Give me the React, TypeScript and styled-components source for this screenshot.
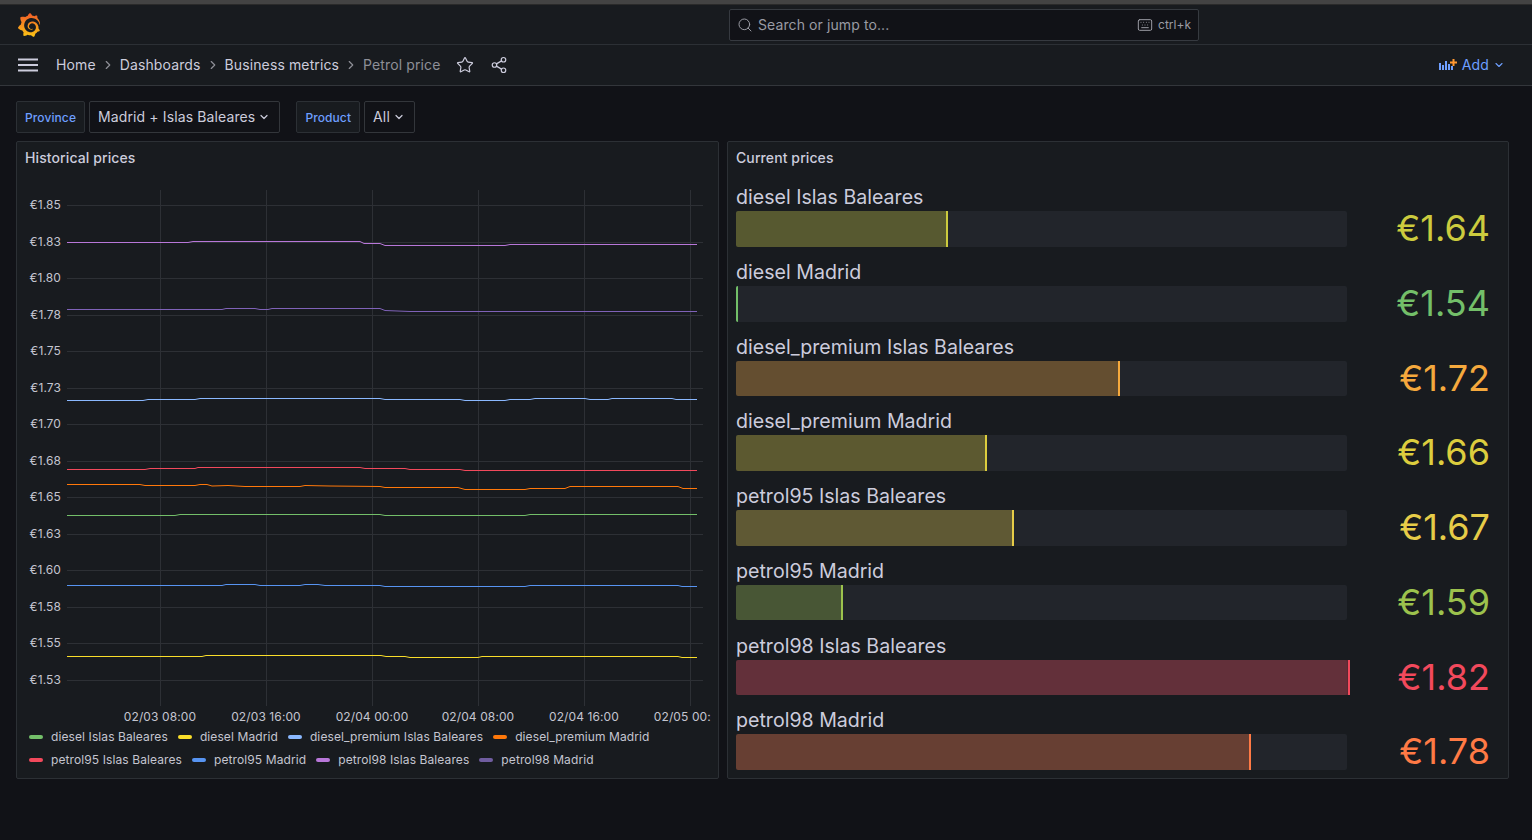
import React from "react";
import styled, { createGlobalStyle } from "styled-components";
import { ChevronDown, ChevronRight, Keyboard, Search, Share2, Star } from "lucide-react";
import { SiGrafana } from "react-icons/si";

const Global = createGlobalStyle`
  html, body { margin: 0; padding: 0; background: #111217; }
  body { font-family: Inter, "Liberation Sans", sans-serif; color: #ccccdc; width: 1532px; height: 840px; overflow: hidden; }
  * { box-sizing: border-box; }
`;

const Page = styled.div`
  width: 1532px;
  height: 840px;
  display: flex;
  flex-direction: column;
`;
const WindowEdge = styled.div`
  height: 5px;
  background: #434343;
  border-bottom: 1px solid #2a2a2a;
  flex: none;
`;
const TopBar = styled.header`
  height: 40px;
  flex: none;
  display: flex;
  align-items: center;
  background: #181b1f;
  border-bottom: 1px solid #2c3035;
  padding-left: 17px;
`;
const LogoMark = styled.svg`
  width: 24px;
  height: 24px;
  flex: none;
`;
const SearchBox = styled.div`
  margin-left: 688px;
  width: 470px;
  height: 32px;
  display: flex;
  align-items: center;
  background: #111217;
  border: 1px solid #363a40;
  border-radius: 2px;
  padding: 0 7px;
  color: #9a9ba3;
  font-size: 14px;
  letter-spacing: 0.1px;
`;
const SearchText = styled.span`
  margin-left: 5px;
  flex: 1;
`;
const Shortcut = styled.span`
  display: flex;
  align-items: center;
  gap: 5px;
  font-size: 12px;
  letter-spacing: 0;
`;
const NavBar = styled.nav`
  height: 41px;
  flex: none;
  display: flex;
  align-items: center;
  background: #181b1f;
  border-bottom: 1px solid #33363b;
  padding: 0 27px 1px 18px;
  font-size: 14px;
  letter-spacing: 0.12px;
`;
const Burger = styled.svg`
  width: 20px;
  height: 14px;
  margin-right: 18px;
  flex: none;
`;
const Crumb = styled.span<{ $last?: boolean }>`
  color: ${(p) => (p.$last ? "#8e8f97" : "#ccccdc")};
`;
const CrumbSep = styled.span`
  width: 24px;
  display: flex;
  justify-content: center;
  color: #8e8f97;
`;
const NavIcon = styled.span<{ $first?: boolean }>`
  display: flex;
  color: #ccccdc;
  margin-left: ${(p) => (p.$first ? "15px" : "16px")};
`;
const AddButton = styled.div`
  margin-left: auto;
  display: flex;
  align-items: center;
  color: #6e9fff;
  gap: 4px;
`;
const Filters = styled.div`
  display: flex;
  align-items: center;
  height: 32px;
  margin: 15px 0 8px 16px;
`;
const FilterLabel = styled.div`
  height: 32px;
  display: flex;
  align-items: center;
  padding: 0 8px;
  background: #181b1f;
  border: 1px solid #2c3035;
  border-radius: 2px;
  color: #6e9fff;
  font-size: 12px;
  font-weight: 500;
  letter-spacing: 0.1px;
  margin-right: 4px;
`;
const FilterValue = styled.div<{ $gap?: boolean }>`
  height: 32px;
  display: flex;
  align-items: center;
  gap: 3px;
  padding: 0 9px 1px 8px;
  background: #111217;
  border: 1px solid #33363b;
  border-radius: 2px;
  font-size: 14px;
  letter-spacing: 0.12px;
  margin-right: ${(p) => (p.$gap ? "16px" : "0")};
`;
const Panels = styled.main`
  display: flex;
  gap: 8px;
  padding-left: 16px;
  height: 638px;
`;
const Panel = styled.section<{ $width: number }>`
  width: ${(p) => p.$width}px;
  background: #181b1f;
  border: 1px solid #2c3035;
  border-radius: 2px;
  display: flex;
  flex-direction: column;
`;
const PanelTitle = styled.h2`
  margin: 0;
  flex: none;
  height: 31px;
  padding: 7px 8px 0;
  font-size: 14px;
  line-height: 18px;
  font-weight: 500;
  letter-spacing: 0.1px;
  color: #ccccdc;
`;
const ChartSvg = styled.svg`
  display: block;
  width: 694px;
  height: 546px;
  margin-top: 7px;
  flex: none;
  font-family: Inter, "Liberation Sans", sans-serif;
  font-size: 12px;
  letter-spacing: 0.1px;
`;
const Legend = styled.div`
  display: flex;
  flex-wrap: wrap;
  padding-left: 12px;
  column-gap: 10px;
  font-size: 12px;
  letter-spacing: 0.1px;
  line-height: 23px;
  margin-top: -1px;
`;
const LegendBreak = styled.div`
  flex-basis: 100%;
  height: 0;
`;
const LegendItem = styled.div`
  display: flex;
  align-items: center;
  color: #c4c5d0;
`;
const Swatch = styled.i<{ $color: string }>`
  width: 14px;
  height: 4px;
  border-radius: 2px;
  margin-right: 8px;
  background: ${(p) => p.$color};
`;
const GaugeList = styled.div`
  padding: 0 18px 0 8px;
  margin-top: -0.4px;
`;
const GaugeRow = styled.div`
  height: 74.71px;
  display: grid;
  grid-template-columns: 611px 1fr;
  grid-template-rows: 1fr 36px;
`;
const GaugeLabel = styled.div`
  grid-column: 1 / 3;
  align-self: end;
  font-size: 19.6px;
  line-height: 22px;
  margin-bottom: 3px;
  color: #ccccdc;
  white-space: nowrap;
`;
const Track = styled.div`
  position: relative;
  background: #22252b;
  border-radius: 2px;
  height: 35.6px;
`;
const Fill = styled.div<{ $color: string; $width: number }>`
  position: absolute;
  left: 0;
  top: 0;
  bottom: 0;
  width: ${(p) => p.$width}px;
  background: ${(p) => p.$color}50;
  border-right: 2px solid ${(p) => p.$color};
  border-radius: 2px 0 0 2px;
`;
const GaugeValue = styled.div<{ $color: string }>`
  color: ${(p) => p.$color};
  font-size: 36px;
  line-height: 34px;
  text-align: right;
  font-weight: 400;
  white-space: nowrap;
`;

type Pt = [number, number];
const series: { name: string; color: string; line?: string; pts: Pt[] }[] = [
  { name: "diesel Islas Baleares", color: "#73bf69", pts: [[67,515.5],[175,515.5],[180,514.5],[380,514.5],[385,515.5],[525,515.5],[530,514.5],[697,514.5]] },
  { name: "diesel Madrid", color: "#fade2a", pts: [[67,656.5],[202,656.5],[206,655.5],[381,655.5],[386,656.5],[405,656.5],[410,657.5],[478,657.5],[482,656.5],[678,656.5],[682,657.5],[697,657.5]] },
  { name: "diesel_premium Islas Baleares", color: "#8ab8ff", pts: [[67,400.5],[143,400.5],[148,399.5],[195,399.5],[200,398.5],[380,398.5],[385,399.5],[460,399.5],[465,400.5],[505,400.5],[510,399.5],[530,399.5],[535,398.5],[585,398.5],[590,399.5],[608,399.5],[612,398.5],[672,398.5],[676,399.5],[697,399.5]] },
  { name: "diesel_premium Madrid", color: "#ff780a", pts: [[67,484.5],[140,484.5],[145,485.5],[195,485.5],[200,484.5],[207,484.5],[212,486],[228,485.5],[245,486.5],[300,486.5],[305,485.5],[330,486],[380,486.5],[385,487.5],[458,487.5],[465,489.5],[525,489.5],[530,488.5],[565,488.5],[570,486.5],[678,486.5],[683,488.5],[697,488.5]] },
  { name: "petrol95 Islas Baleares", color: "#f2495c", pts: [[67,469.5],[145,469.5],[150,468.5],[195,468.5],[198,467.5],[360,467.5],[365,468.5],[405,468.5],[410,469.5],[460,469.5],[465,470.5],[697,470.5]] },
  { name: "petrol95 Madrid", color: "#5794f2", pts: [[67,585.5],[222,585.5],[226,584.5],[255,584.5],[260,585.5],[300,585.5],[305,584.5],[318,584.5],[325,585.5],[380,585.5],[385,586.5],[525,586.5],[530,585.5],[678,585.5],[682,586.5],[697,586.5]] },
  { name: "petrol98 Islas Baleares", color: "#b877d9", pts: [[67,242.5],[188,242.5],[193,241.5],[360,241.5],[364,243.5],[380,243.5],[385,245.5],[505,245.5],[510,244.5],[697,244.5]] },
  { name: "petrol98 Madrid", color: "#705da0", line: "#7f62b8", pts: [[67,309.5],[222,309.5],[226,308.5],[255,308.5],[260,309.5],[268,309.5],[272,308.5],[380,308.5],[385,310.5],[410,311.5],[697,311.5]] },
];
const yTicks = ["1.85","1.83","1.80","1.78","1.75","1.73","1.70","1.68","1.65","1.63","1.60","1.58","1.55","1.53"];
const xTicks: [number, string][] = [[160,"02/03 08:00"],[266,"02/03 16:00"],[372,"02/04 00:00"],[478,"02/04 08:00"],[584,"02/04 16:00"],[690,"02/05 00:00"]];

const gauges = [
  { name: "diesel Islas Baleares", value: "€1.64", color: "#cccb3e", width: 212 },
  { name: "diesel Madrid", value: "€1.54", color: "#73bf69", width: 2 },
  { name: "diesel_premium Islas Baleares", value: "€1.72", color: "#f5a93d", width: 384 },
  { name: "diesel_premium Madrid", value: "€1.66", color: "#dccd3e", width: 251 },
  { name: "petrol95 Islas Baleares", value: "€1.67", color: "#e6cc48", width: 278 },
  { name: "petrol95 Madrid", value: "€1.59", color: "#9cc24d", width: 107 },
  { name: "petrol98 Islas Baleares", value: "€1.82", color: "#f2495c", width: 614 },
  { name: "petrol98 Madrid", value: "€1.78", color: "#ff7a45", width: 515 },
];

const Chart = () => (
  <ChartSvg viewBox="17 180 694 546">
    {yTicks.map((t, i) => {
      const y = Math.round(205 + i * 36.54) + 0.5;
      return (
        <g key={t}>
          <line x1={67} x2={703} y1={y} y2={y} stroke="#2d3035" />
          <text x={61} y={y + 3.5} textAnchor="end" fill="#c4c5d0">€{t}</text>
        </g>
      );
    })}
    {xTicks.map(([x, t]) => (
      <g key={t}>
        <line x1={x + 0.5} x2={x + 0.5} y1={190} y2={706} stroke="#2d3035" />
        <text x={x} y={721} textAnchor="middle" fill="#c4c5d0">{t}</text>
      </g>
    ))}
    {series.map((s) => (
      <polyline key={s.name} points={s.pts.map((p) => p.join(",")).join(" ")} fill="none" stroke={s.line ?? s.color} strokeWidth={1} />
    ))}
  </ChartSvg>
);

export default function App() {
  return (
    <Page>
      <Global />
      <WindowEdge />
      <TopBar>
        <LogoMark viewBox="0 0 24 24">
          <defs>
            <linearGradient id="grafanaFill" x1="0.5" y1="1" x2="0.5" y2="0">
              <stop offset="0" stopColor="#fbc615" />
              <stop offset="1" stopColor="#f05a28" />
            </linearGradient>
          </defs>
          <SiGrafana size={24} fill="url(#grafanaFill)" />
        </LogoMark>
        <SearchBox>
          <Search size={16} strokeWidth={1.5} />
          <SearchText>Search or jump to...</SearchText>
          <Shortcut>
            <Keyboard size={16} strokeWidth={1.5} />
            ctrl+k
          </Shortcut>
        </SearchBox>
      </TopBar>
      <NavBar>
        <Burger viewBox="0 0 20 14">
          <path d="M0 1.5h20M0 7h20M0 12.5h20" stroke="#ccccdc" strokeWidth="2" />
        </Burger>
        <Crumb>Home</Crumb>
        <CrumbSep><ChevronRight size={14} strokeWidth={2} /></CrumbSep>
        <Crumb>Dashboards</Crumb>
        <CrumbSep><ChevronRight size={14} strokeWidth={2} /></CrumbSep>
        <Crumb>Business metrics</Crumb>
        <CrumbSep><ChevronRight size={14} strokeWidth={2} /></CrumbSep>
        <Crumb $last>Petrol price</Crumb>
        <NavIcon $first><Star size={18} strokeWidth={1.6} /></NavIcon>
        <NavIcon><Share2 size={18} strokeWidth={1.6} /></NavIcon>
        <AddButton>
          <svg width="20" height="14" viewBox="0 0 20 14">
            <path d="M1 5h2v7H1zM4 7h2v5H4zM7 3h2v9H7zM10 6h2v6h-2zM13 8h2v4h-2z" fill="#6e9fff" />
            <path d="M12 4.5h7M15.5 1v7" stroke="#ff9830" strokeWidth="2" />
          </svg>
          Add
          <ChevronDown size={12} strokeWidth={2.2} />
        </AddButton>
      </NavBar>
      <Filters>
        <FilterLabel>Province</FilterLabel>
        <FilterValue $gap>
          Madrid + Islas Baleares <ChevronDown size={12} strokeWidth={2.4} />
        </FilterValue>
        <FilterLabel>Product</FilterLabel>
        <FilterValue>
          All <ChevronDown size={12} strokeWidth={2.4} />
        </FilterValue>
      </Filters>
      <Panels>
        <Panel $width={703}>
          <PanelTitle>Historical prices</PanelTitle>
          <Chart />
          <Legend>
            {series.map((s, i) => (
              <React.Fragment key={s.name}>
                {i === 4 && <LegendBreak />}
                <LegendItem>
                  <Swatch $color={s.color} />
                  {s.name}
                </LegendItem>
              </React.Fragment>
            ))}
          </Legend>
        </Panel>
        <Panel $width={782}>
          <PanelTitle>Current prices</PanelTitle>
          <GaugeList>
            {gauges.map((g) => (
              <GaugeRow key={g.name}>
                <GaugeLabel>{g.name}</GaugeLabel>
                <Track>
                  <Fill $color={g.color} $width={g.width} />
                </Track>
                <GaugeValue $color={g.color}>{g.value}</GaugeValue>
              </GaugeRow>
            ))}
          </GaugeList>
        </Panel>
      </Panels>
    </Page>
  );
}
